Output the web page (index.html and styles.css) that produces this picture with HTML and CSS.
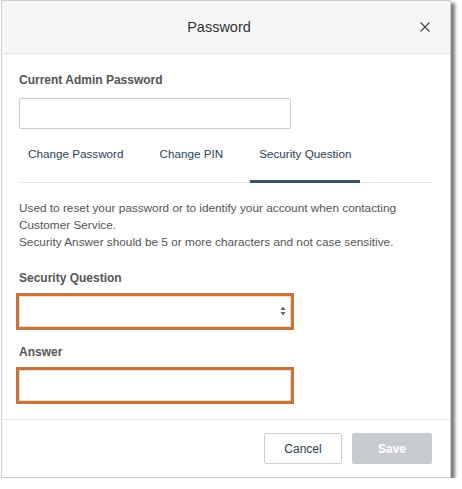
FILE: index.html
```html
<!DOCTYPE html>
<html lang="en">
<head>
<meta charset="utf-8">
<title>Password</title>
<link rel="stylesheet" href="styles.css">
</head>
<body>
<div class="dialog">
  <div class="dialog-header">
    <div class="dialog-title">Password</div>
    <button class="close-btn" aria-label="Close">
      <svg width="10" height="10" viewBox="0 0 10 10"><path d="M0.5 0.5 L9.5 9.5 M9.5 0.5 L0.5 9.5" stroke="#444" stroke-width="1.1" fill="none"/></svg>
    </button>
  </div>
  <div class="dialog-body">
    <label class="field-label">Current Admin Password</label>
    <input class="text-input" type="password">
    <div class="tabs">
      <div class="tab">Change Password</div>
      <div class="tab">Change PIN</div>
      <div class="tab active">Security Question</div>
    </div>
    <p class="description">Used to reset your password or to identify your account when contacting Customer Service.<br>Security Answer should be 5 or more characters and not case sensitive.</p>
    <label class="field-label label-gap">Security Question</label>
    <div class="select-wrap">
      <select class="text-input select-input invalid"><option></option></select>
      <svg class="select-arrows" width="6" height="10" viewBox="0 0 6 10"><path d="M3 0.5 L5.5 4 L0.5 4 Z M3 9.5 L5.5 6 L0.5 6 Z" fill="#666"/></svg>
    </div>
    <label class="field-label label-gap2">Answer</label>
    <input class="text-input invalid" type="text">
  </div>
  <div class="dialog-footer">
    <button class="btn btn-cancel">Cancel</button>
    <button class="btn btn-save">Save</button>
  </div>
</div>
</body>
</html>
```
FILE: styles.css
```css
html, body {
  margin: 0;
  padding: 0;
  background: #ffffff;
}
body {
  font-family: "Liberation Sans", Arial, Helvetica, sans-serif;
  color: #555;
}
.dialog {
  box-sizing: border-box;
  width: 450px;
  margin-left: 1px;
  border: 1px solid #cfcfcf;
  background: #fff;
  box-shadow: 4px 3px 3px rgba(0, 0, 0, 0.5);
}
.dialog-header {
  display: flex;
  align-items: center;
  height: 52px;
  padding: 0 18px 0 18px;
  background: #f6f6f6;
  border-bottom: 1px solid #e4e4e4;
}
.dialog-title {
  flex: 1;
  text-align: center;
  font-size: 14.5px;
  color: #333;
}
.close-btn {
  width: 14px;
  height: 14px;
  padding: 0;
  margin: 0;
  border: 0;
  background: none;
  display: flex;
  align-items: center;
  justify-content: center;
}
.dialog-body {
  padding: 18px 18px 18px 17px;
}
.field-label {
  display: block;
  font-size: 12px;
  line-height: 16px;
  font-weight: bold;
  color: #555;
}
.label-gap { margin-top: 19px; }
.label-gap2 { margin-top: 17px; }
.text-input {
  display: block;
  box-sizing: border-box;
  width: 272px;
  height: 31px;
  margin: 10px 0 0 0;
  padding: 0 8px;
  border: 1px solid #cdcdcd;
  border-radius: 2px;
  background: #fff;
  font-family: inherit;
  font-size: 12px;
}
.text-input.invalid {
  border-color: #efdccd;
  border-radius: 0;
  box-shadow: 0 0 0 3px #c6743a;
}
.select-wrap {
  position: relative;
  width: 272px;
}
.select-input {
  -webkit-appearance: none;
  appearance: none;
  outline: none;
}
.select-arrows {
  position: absolute;
  right: 5px;
  top: 10px;
}
.tabs {
  display: flex;
  gap: 18px;
  margin-top: 17px;
  border-bottom: 1px solid #e6e6e6;
}
.tab {
  padding: 0 9px 18px 9px;
  font-size: 11.7px;
  line-height: 16px;
  color: #2c4358;
  border-bottom: 3px solid transparent;
  margin-bottom: -1px;
}
.tab.active {
  border-bottom-color: #3b5367;
}
.description {
  margin: 17px 0 0 0;
  font-size: 11.8px;
  line-height: 17px;
  color: #555;
}
.dialog-footer {
  display: flex;
  justify-content: flex-end;
  gap: 10px;
  padding: 13px 18px 13px 18px;
  border-top: 1px solid #e6e6e6;
}
.btn {
  box-sizing: border-box;
  height: 31px;
  border-radius: 2px;
  font-family: inherit;
  font-size: 12px;
  padding: 0;
}
.btn-cancel {
  width: 78px;
  background: #fff;
  border: 1px solid #cfcfcf;
  color: #2c3e50;
}
.btn-save {
  width: 80px;
  background: #c8cbcf;
  border: 1px solid #c8cbcf;
  color: #fff;
  font-weight: bold;
}
```
